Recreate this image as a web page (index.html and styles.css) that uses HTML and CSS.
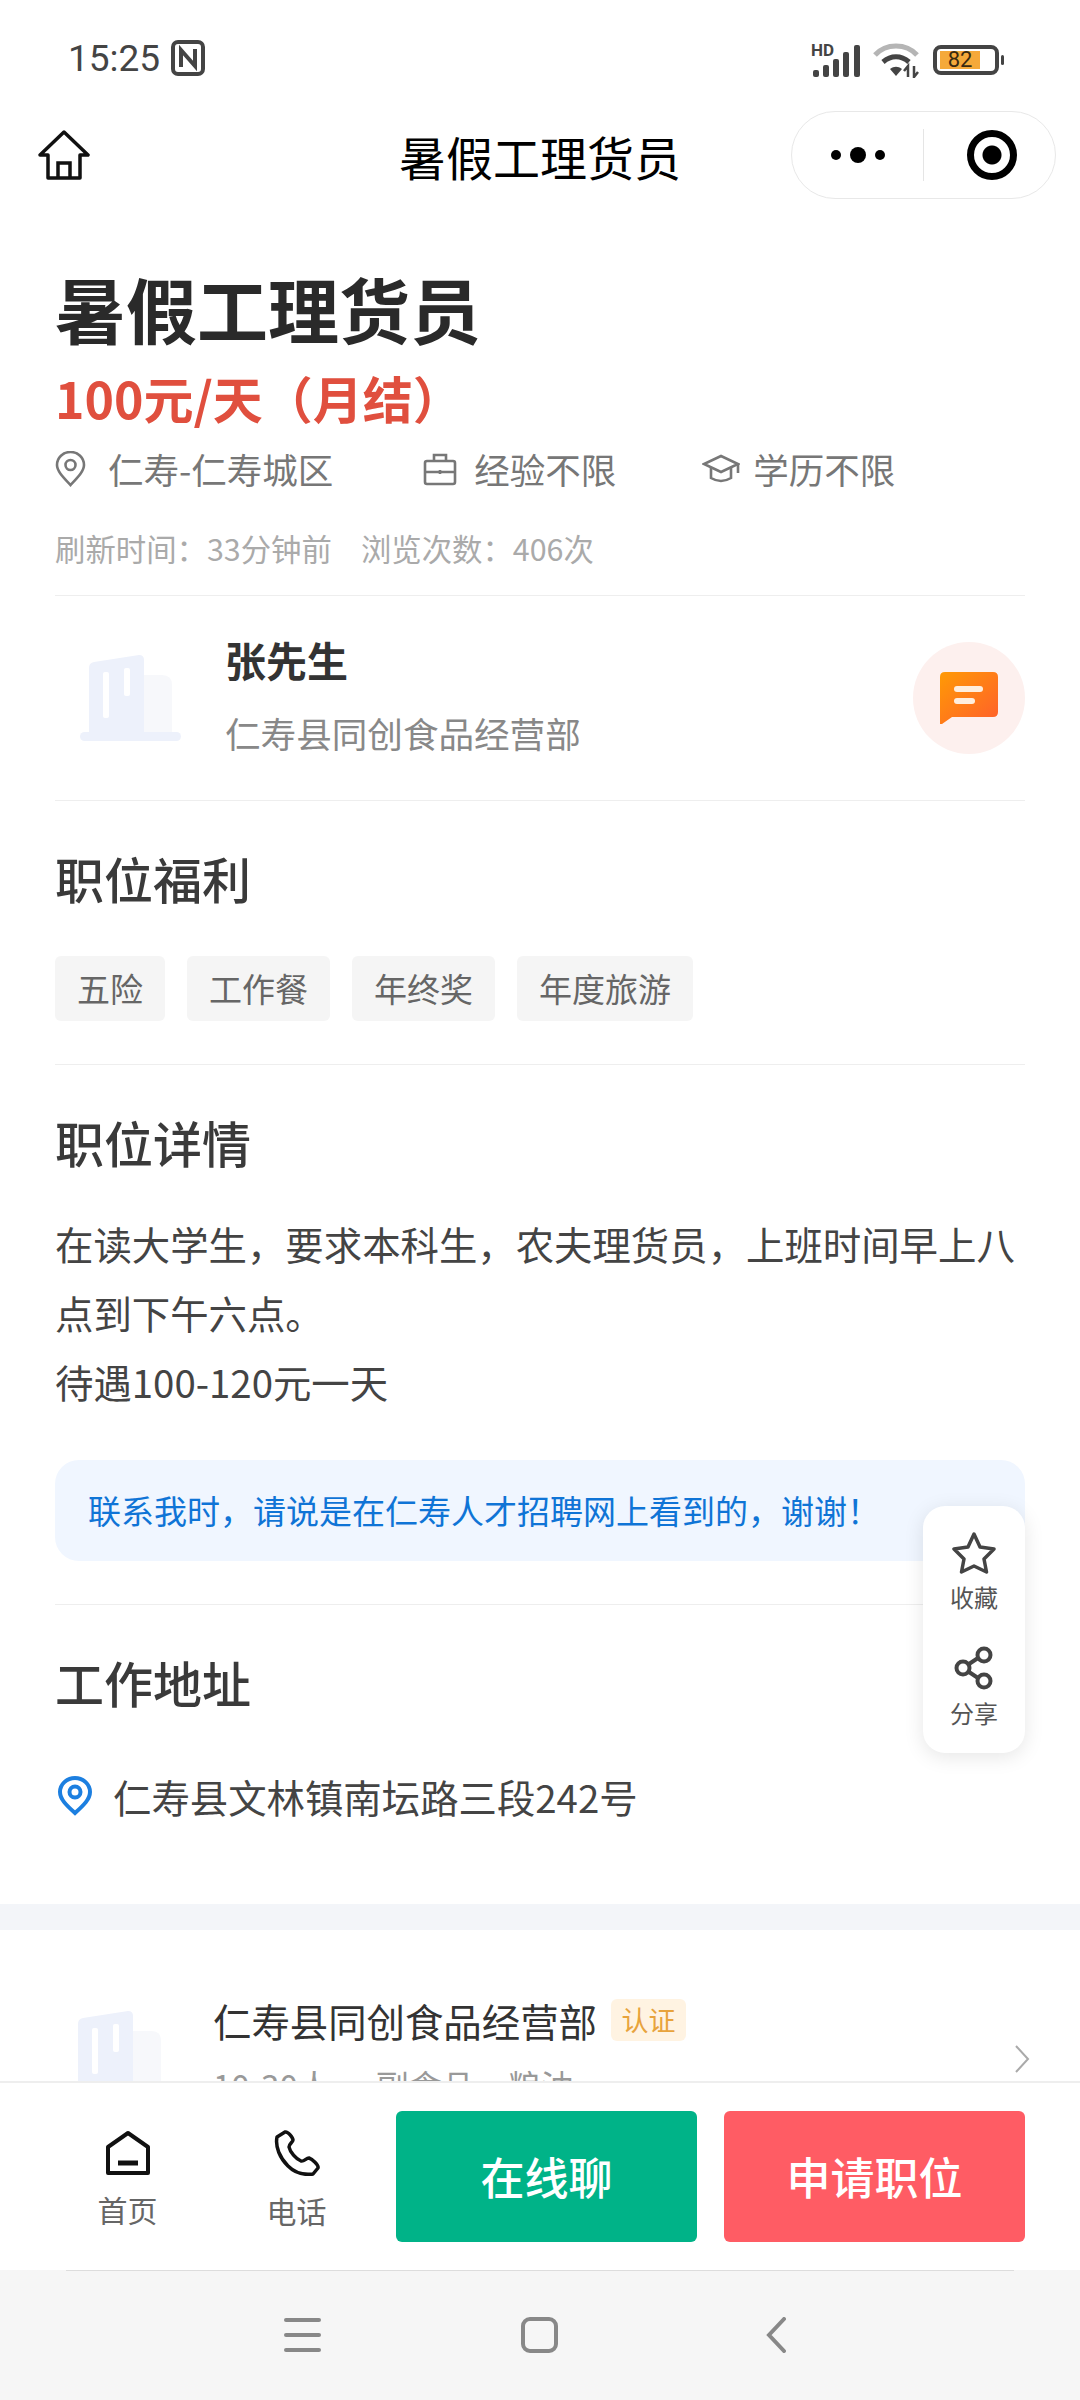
FILE: index.html
```html
<!DOCTYPE html>
<html lang="zh-CN">
<head>
    <meta charset="UTF-8">
    <meta name="viewport" content="width=device-width, initial-scale=1.0">
    <title>暑假工理货员</title>
    <link rel="stylesheet" href="styles.css">
</head>
<body>
<svg class="defs" width="0" height="0">
    <symbol id="logo" viewBox="0 0 101 86">
        <path d="M64 20h18q10 0 10 10v47H64z" fill="#f7f8fb"/>
        <path d="M9 13q0-5 5-6L59 0q5 0 5 5v72H9z" fill="#edf1fb"/>
        <rect x="23" y="17" width="6" height="46" rx="2" fill="#fff"/>
        <rect x="44" y="13" width="6" height="28" rx="2" fill="#fff"/>
        <rect x="0" y="77" width="101" height="9" rx="4.5" fill="#edf1fb"/>
    </symbol>
</svg>
<div class="screen">
    <div class="status-bar">
        <div class="status-left">
            <span class="time">15:25</span>
            <svg width="34" height="36" viewBox="0 0 34 36" fill="none">
                <rect x="2" y="2" width="30" height="32" rx="5" stroke="#444" stroke-width="4"/>
                <path d="M10 27V10l14 16V9" stroke="#444" stroke-width="4"/>
            </svg>
        </div>
        <div class="status-right">
            <svg class="signal" width="50" height="42" viewBox="0 -8 50 42">
                <text x="0" y="13" class="hd">HD</text>
                <rect x="2" y="27" width="6" height="7" rx="2" fill="#444"/>
                <rect x="12" y="22" width="6" height="12" rx="2" fill="#444"/>
                <rect x="22" y="16" width="6" height="18" rx="2" fill="#444"/>
                <rect x="32" y="9" width="6" height="25" rx="2" fill="#444"/>
                <rect x="43" y="2" width="6" height="32" rx="2" fill="#444"/>
            </svg>
            <svg width="48" height="36" viewBox="0 0 48 36" fill="none">
                <path d="M2 13C13 1 33 1 44 13" stroke="#b5b5b5" stroke-width="5"/>
                <path d="M10 20c8-7 18-7 26 0" stroke="#444" stroke-width="5"/>
                <path d="M17 27c4-3 8-3 12 0l-6 7z" fill="#444"/>
                <path d="M35 35V24l-4 5M41 24v11l4-5" stroke="#444" stroke-width="2.5"/>
            </svg>
            <div class="battery">
                <div class="battery-body"><span class="battery-fill">82</span></div>
                <div class="battery-nub"></div>
            </div>
        </div>
    </div>

    <div class="nav-bar">
        <svg class="nav-home" width="52" height="50" viewBox="0 0 52 50" fill="none">
            <path d="M2 25 26 2l24 23h-8v23H10V25z" stroke="#111" stroke-width="3.5" stroke-linejoin="round"/>
            <path d="M20 48V33h12v15" stroke="#111" stroke-width="3.5"/>
        </svg>
        <div class="nav-title">暑假工理货员</div>
        <div class="capsule">
            <div class="capsule-dots"><i></i><b></b><i></i></div>
            <div class="capsule-line"></div>
            <div class="capsule-target"></div>
        </div>
    </div>

    <div class="content">
        <div class="job-head">
            <h1 class="job-title">暑假工理货员</h1>
            <div class="salary">100元/天（月结）</div>
            <div class="meta">
                <div class="meta-item meta-place">
                    <svg width="31" height="36" viewBox="0 0 31 36" fill="none" stroke="#777" stroke-width="2.6">
                        <path d="M15.5 34C8 26 2 20 2 14a13.5 13 0 0 1 27 0c0 6-6 12-13.500 20z"/>
                        <circle cx="15.500" cy="14" r="5"/>
                    </svg>
                    <span>仁寿-仁寿城区</span>
                </div>
                <div class="meta-item meta-exp">
                    <svg width="36" height="34" viewBox="0 0 36 34" fill="none" stroke="#777" stroke-width="2.6">
                        <rect x="3" y="9" width="30" height="23" rx="2"/>
                        <path d="M12 9V3h12v6M3 20h30M18 18v4"/>
                    </svg>
                    <span>经验不限</span>
                </div>
                <div class="meta-item meta-edu">
                    <svg width="38" height="32" viewBox="0 0 38 32" fill="none" stroke="#777" stroke-width="2.6">
                        <path d="M19 3 36 11 19 19 2 11z"/>
                        <path d="M9 15v10q10 6 20 0V15M36 11v9"/>
                    </svg>
                    <span>学历不限</span>
                </div>
            </div>
            <div class="stats">
                <span>刷新时间：33分钟前</span>
                <span>浏览次数：406次</span>
            </div>
        </div>

        <div class="contact">
            <svg class="logo" width="101" height="86"><use href="#logo"/></svg>
            <div class="contact-text">
                <div class="contact-name">张先生</div>
                <div class="contact-company">仁寿县同创食品经营部</div>
            </div>
            <div class="chat-btn">
                <svg width="58" height="52" viewBox="0 0 58 52">
                    <defs>
                        <linearGradient id="chatGrad" x1="0" y1="0" x2="1" y2="1">
                            <stop offset="0" stop-color="#ff9a05"/>
                            <stop offset="1" stop-color="#ff5f2b"/>
                        </linearGradient>
                    </defs>
                    <path d="M5 0h48q5 0 5 5v35q0 5-5 5H12L2 52H0V5q0-5 5-5z" fill="url(#chatGrad)"/>
                    <rect x="14" y="14" width="29" height="6" rx="3" fill="#ffeedd"/>
                    <rect x="14" y="26" width="21" height="6" rx="3" fill="#ffeedd"/>
                </svg>
            </div>
        </div>

        <div class="section">
            <h2 class="section-title">职位福利</h2>
            <div class="tags">
                <span class="tag">五险</span>
                <span class="tag">工作餐</span>
                <span class="tag">年终奖</span>
                <span class="tag">年度旅游</span>
            </div>
        </div>

        <div class="section">
            <h2 class="section-title">职位详情</h2>
            <div class="desc">在读大学生，要求本科生，农夫理货员，上班时间早上八点到下午六点。<br>待遇100-120元一天</div>
            <div class="notice">联系我时，请说是在仁寿人才招聘网上看到的，谢谢！</div>
        </div>

        <div class="section section-last">
            <h2 class="section-title">工作地址</h2>
            <div class="address">
                <svg width="36" height="40" viewBox="0 0 36 40" fill="none" stroke="#1c7fe0" stroke-width="4">
                    <path d="M18 37C9 29 3 23 3 16a15 14 0 0 1 30 0c0 7-6 13-15 21z"/>
                    <circle cx="18" cy="16" r="5.500"/>
                </svg>
                <span>仁寿县文林镇南坛路三段242号</span>
            </div>
        </div>

        <div class="band"></div>

        <div class="company-card">
            <svg class="logo-small" width="101" height="86"><use href="#logo"/></svg>
            <div class="company-info">
                <div class="company-top">
                    <span class="company-name">仁寿县同创食品经营部</span>
                    <span class="badge">认证</span>
                </div>
                <div class="company-sub">
                    <span>10-30人</span><span>·</span><span>副食品、粮油</span>
                </div>
            </div>
            <svg class="chevron" width="16" height="28" viewBox="0 0 16 28" fill="none">
                <path d="M2 1 14 14 2 27" stroke="#aaa" stroke-width="2"/>
            </svg>
        </div>
    </div>

    <div class="action-bar">
        <div class="action-tab">
            <svg width="44" height="44" viewBox="0 0 44 44" fill="none">
                <path d="M2 42V16L22 2l20 14v26z" stroke="#111" stroke-width="4" stroke-linejoin="round"/>
                <path d="M12 32h20" stroke="#111" stroke-width="5"/>
            </svg>
            <span>首页</span>
        </div>
        <div class="action-tab">
            <svg width="46" height="46" viewBox="0 0 46 46" fill="none">
                <path d="M11 2 3 7c-2 10 3 21 11 29s18 9 25 8l5-6c1-3-6-9-9-10-3 0-5 4-8 3-5-2-11-9-12-14 0-3 4-5 4-7C19 8 14 1 11 2z" stroke="#111" stroke-width="3.500" stroke-linejoin="round"/>
            </svg>
            <span>电话</span>
        </div>
        <div class="action-btn action-chat">在线聊</div>
        <div class="action-btn action-apply">申请职位</div>
    </div>

    <div class="sys-nav">
        <div class="sys-menu"><i></i><i></i><i></i></div>
        <div class="sys-home"></div>
        <svg width="20" height="36" viewBox="0 0 20 36" fill="none">
            <path d="M18 2 3 18l15 16" stroke="#888" stroke-width="4" stroke-linecap="round"/>
        </svg>
    </div>

    <div class="side-float">
        <div class="side-item">
            <svg width="46" height="44" viewBox="0 0 46 44" fill="none">
                <path d="M23 4l6 13 14 2-10 10 2.500 13L23 36l-12.500 6L13 29 3 19l14-2z" stroke="#444" stroke-width="3.500" stroke-linejoin="round"/>
            </svg>
            <span>收藏</span>
        </div>
        <div class="side-item">
            <svg width="40" height="44" viewBox="0 0 40 44" fill="none" stroke="#444" stroke-width="4">
                <circle cx="30" cy="9" r="6.500"/>
                <circle cx="9" cy="22" r="6.500"/>
                <circle cx="30" cy="35" r="6.500"/>
                <path d="M15 18 24 12M15 26l9 6"/>
            </svg>
            <span>分享</span>
        </div>
    </div>
</div>
</body>
</html>
```

FILE: styles.css
```css
* {
    box-sizing: border-box;
}
body {
    margin: 0;
    font-family: "Noto Sans CJK SC", "Noto Sans", sans-serif;
    background-color: #fff;
    color: #333;
}
.defs {
    display: block;
    height: 0;
}
.screen {
    position: relative;
    width: 1080px;
    height: 2400px;
    display: flex;
    flex-direction: column;
    overflow: hidden;
}

/* status bar */
.status-bar {
    height: 110px;
    flex-shrink: 0;
    padding: 36px 76px 0 68px;
    display: flex;
    justify-content: space-between;
    align-items: flex-start;
}
.status-left {
    display: flex;
    align-items: center;
    gap: 11px;
    height: 44px;
}
.time {
    font-family: Roboto, sans-serif;
    font-size: 37px;
    color: #444;
}
.status-right {
    display: flex;
    align-items: center;
    gap: 12px;
    margin-top: 6px;
}
.signal {
    margin-top: -8px;
}
.hd {
    font-family: Roboto, sans-serif;
    font-size: 17px;
    font-weight: 700;
    fill: #444;
}
.battery {
    display: flex;
    align-items: center;
    gap: 2px;
}
.battery-body {
    width: 66px;
    height: 30px;
    border: 4px solid #444;
    border-radius: 8px;
    padding: 2px 0 2px 3px;
}
.battery-fill {
    display: block;
    width: 40px;
    height: 18px;
    background-color: #f5a93a;
    color: #3a2a10;
    font-family: Roboto, sans-serif;
    font-size: 22px;
    line-height: 18px;
    text-align: center;
}
.battery-nub {
    width: 3px;
    height: 10px;
    background-color: #444;
    border-radius: 2px;
}

/* nav bar */
.nav-bar {
    height: 90px;
    flex-shrink: 0;
    padding: 0 24px 0 38px;
    display: flex;
    align-items: center;
    position: relative;
}
.nav-title {
    position: absolute;
    left: 0;
    right: 0;
    text-align: center;
    font-size: 47px;
    color: #000;
}
.capsule {
    margin-left: auto;
    width: 265px;
    height: 88px;
    border: 1px solid #e8e8e8;
    border-radius: 44px;
    display: flex;
    align-items: center;
    position: relative;
    background-color: #fff;
}
.capsule-dots {
    width: 131px;
    display: flex;
    align-items: center;
    justify-content: center;
    gap: 9px;
}
.capsule-dots i {
    width: 10px;
    height: 10px;
    background-color: #000;
    border-radius: 50%;
}
.capsule-dots b {
    width: 16px;
    height: 16px;
    background-color: #000;
    border-radius: 50%;
}
.capsule-line {
    width: 1px;
    height: 52px;
    background-color: #e5e5e5;
}
.capsule-target {
    width: 50px;
    height: 50px;
    margin-left: 43px;
    border: 7px solid #000;
    border-radius: 50%;
    background: radial-gradient(circle, #000 9px, #fff 10px);
}

/* main column, cut off by the action bar */
.content {
    flex: 1;
    min-height: 0;
    overflow: hidden;
}
.job-head {
    margin: 0 55px;
    padding: 62px 0 27px;
    border-bottom: 1px solid #eee;
}
.job-title {
    margin: 0;
    font-size: 71px;
    line-height: 90px;
    font-weight: 700;
    color: #2a2a2a;
}
.salary {
    margin-top: 15px;
    font-size: 50px;
    line-height: 60px;
    font-weight: 700;
    color: #e04f3e;
}
.meta {
    margin-top: 17px;
    display: flex;
    gap: 86px;
    font-size: 35.5px;
    line-height: 50px;
    color: #777;
}
.meta-item {
    display: flex;
    align-items: center;
    gap: 16px;
}
.meta-place {
    gap: 22px;
}
.meta-exp {
    margin-left: 3px;
}
.meta-edu {
    gap: 13px;
}
.stats {
    margin-top: 34px;
    display: flex;
    gap: 29px;
    font-size: 30.4px;
    line-height: 40px;
    color: #aaa;
}
.contact {
    margin: 0 55px;
    height: 205px;
    display: flex;
    align-items: center;
    border-bottom: 1px solid #eee;
}
.logo {
    margin: 0 44px 0 25px;
    flex-shrink: 0;
}
.contact-text {
    flex: 1;
    margin-top: -4px;
}
.contact-name {
    font-size: 41px;
    line-height: 50px;
    font-weight: 700;
    color: #333;
}
.contact-company {
    margin-top: 24px;
    font-size: 35.6px;
    line-height: 50px;
    color: #888;
}
.chat-btn {
    width: 112px;
    height: 112px;
    border-radius: 50%;
    background-color: #fdf0ee;
    display: flex;
    align-items: center;
    justify-content: center;
}

.section {
    margin: 0 55px;
    padding: 45px 0 43px;
    border-bottom: 1px solid #eee;
}
.section-last {
    border-bottom: none;
    padding-bottom: 78px;
}
.section-title {
    margin: 0;
    font-size: 49px;
    line-height: 64px;
    font-weight: 500;
    color: #3a3a3a;
}
.tags {
    margin-top: 46px;
    display: flex;
    gap: 22px;
}
.tag {
    height: 65px;
    padding: 0 22px;
    background-color: #f5f5f5;
    border-radius: 6px;
    font-size: 33px;
    line-height: 65px;
    color: #666;
}
.desc {
    margin-top: 35px;
    font-size: 38.4px;
    line-height: 69px;
    color: #444;
}
.notice {
    margin-top: 44px;
    height: 101px;
    padding: 0 33px;
    background-color: #f0f6ff;
    border-radius: 24px;
    font-size: 33px;
    line-height: 101px;
    color: #0f74d6;
}
.address {
    margin-top: 52px;
    padding-left: 2px;
    display: flex;
    align-items: center;
    gap: 20px;
    font-size: 38.4px;
    line-height: 60px;
    color: #444;
}
.band {
    height: 26px;
    background-color: #f3f5f9;
}
.company-card {
    padding: 69px 50px 0 69px;
    display: flex;
    align-items: flex-start;
}
.logo-small {
    margin: 12px 43px 0 0;
    flex-shrink: 0;
}
.company-info {
    flex: 1;
}
.company-top {
    display: flex;
    align-items: center;
    gap: 14px;
    height: 42px;
}
.company-name {
    font-size: 38.4px;
    color: #333;
}
.badge {
    width: 75px;
    height: 42px;
    background-color: #fff3e2;
    border-radius: 6px;
    font-size: 27px;
    line-height: 42px;
    text-align: center;
    color: #e8a33c;
}
.company-sub {
    margin-top: 22px;
    display: flex;
    gap: 6px;
    font-size: 33px;
    line-height: 44px;
    color: #999;
}
.chevron {
    margin-top: 46px;
}

/* bottom actions */
.action-bar {
    height: 189px;
    flex-shrink: 0;
    background-color: #fff;
    border-top: 2px solid #eee;
    display: flex;
    align-items: center;
    position: relative;
}
.action-tab {
    width: 171px;
    padding-top: 6px;
    display: flex;
    flex-direction: column;
    align-items: center;
    gap: 14px;
    font-size: 30px;
    line-height: 40px;
    color: #666;
}
.action-tab:first-child {
    margin-left: 42px;
}
.action-tab + .action-tab {
    margin-left: -2px;
    margin-right: 14px;
}
.action-btn {
    height: 131px;
    border-radius: 6px;
    font-size: 44px;
    line-height: 131px;
    font-weight: 500;
    text-align: center;
    color: #fff;
}
.action-chat {
    width: 301px;
    background-color: #00b388;
}
.action-apply {
    width: 301px;
    background-color: #ff5c64;
    margin-left: 27px;
}

/* system navigation */
.sys-nav {
    height: 130px;
    flex-shrink: 0;
    background-color: #f6f6f6;
    position: relative;
    display: flex;
    align-items: center;
    padding-left: 284px;
}
.sys-nav::before {
    content: "";
    position: absolute;
    top: 0;
    left: 66px;
    right: 66px;
    height: 1px;
    background-color: #ddd;
}
.sys-menu {
    width: 37px;
    display: flex;
    flex-direction: column;
    gap: 11px;
}
.sys-menu i {
    display: block;
    height: 4px;
    background-color: #888;
    border-radius: 2px;
}
.sys-home {
    width: 37px;
    height: 36px;
    margin: 0 208px 0 200px;
    border: 4px solid #888;
    border-radius: 9px;
}

/* floating favourites and share */
.side-float {
    position: absolute;
    left: 923px;
    top: 1506px;
    width: 102px;
    height: 247px;
    padding-top: 24px;
    background-color: #fff;
    border-radius: 22px;
    box-shadow: 0 4px 20px rgba(0, 0, 0, 0.1);
    display: flex;
    flex-direction: column;
    align-items: center;
    gap: 33px;
}
.side-item {
    display: flex;
    flex-direction: column;
    align-items: center;
    gap: 7px;
    font-size: 24px;
    line-height: 32px;
    color: #555;
}
```
